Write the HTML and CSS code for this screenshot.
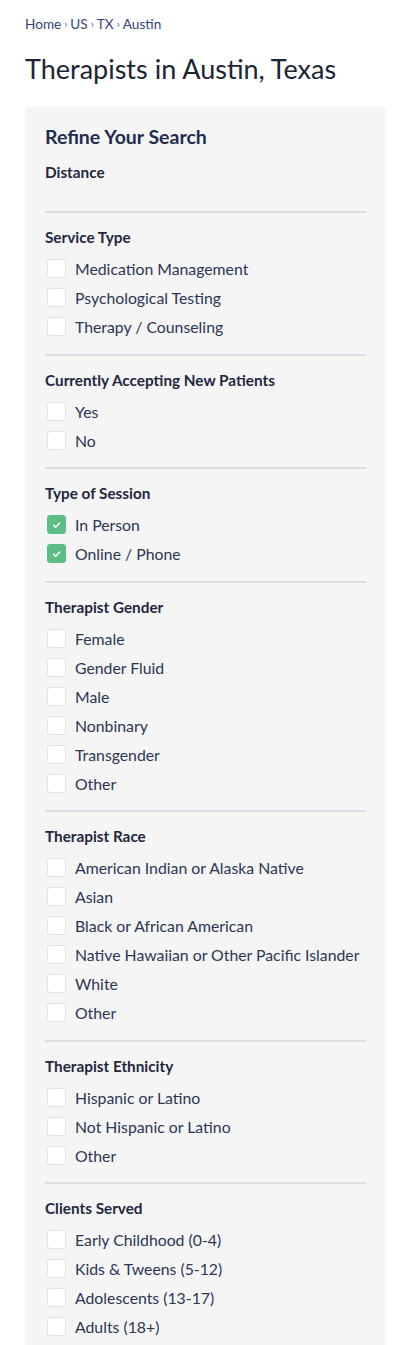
FILE: index.html
```html
<!DOCTYPE html>
<html lang="en">
<head>
<meta charset="utf-8">
<title>Therapists in Austin, Texas</title>
<link rel="stylesheet" href="styles.css">
</head>
<body>
<div class="page">
  <nav class="crumbs"><a>Home</a><span class="sep">›</span><a>US</a><span class="sep">›</span><a>TX</a><span class="sep">›</span><a>Austin</a></nav>
  <h1 class="title">Therapists in Austin, Texas</h1>
  <aside class="panel">
    <h2 class="panel-title">Refine Your Search</h2>
    <div class="section first">
      <h3 class="heading">Distance</h3>
      <div class="distance-space"></div>
    </div>
    <div class="section">
      <h3 class="heading">Service Type</h3>
      <ul class="opts">
        <li class="opt"><span class="box"></span>Medication Management</li>
        <li class="opt"><span class="box"></span>Psychological Testing</li>
        <li class="opt"><span class="box"></span>Therapy / Counseling</li>
      </ul>
    </div>
    <div class="section">
      <h3 class="heading">Currently Accepting New Patients</h3>
      <ul class="opts">
        <li class="opt"><span class="box"></span>Yes</li>
        <li class="opt"><span class="box"></span>No</li>
      </ul>
    </div>
    <div class="section">
      <h3 class="heading">Type of Session</h3>
      <ul class="opts">
        <li class="opt"><span class="box checked"><svg viewBox="0 0 18 18" width="18" height="18"><path d="M6 9.2l2.1 2.1L12.2 7" fill="none" stroke="#fff" stroke-width="1.6" stroke-linecap="round" stroke-linejoin="round"/></svg></span>In Person</li>
        <li class="opt"><span class="box checked"><svg viewBox="0 0 18 18" width="18" height="18"><path d="M6 9.2l2.1 2.1L12.2 7" fill="none" stroke="#fff" stroke-width="1.6" stroke-linecap="round" stroke-linejoin="round"/></svg></span>Online / Phone</li>
      </ul>
    </div>
    <div class="section">
      <h3 class="heading">Therapist Gender</h3>
      <ul class="opts">
        <li class="opt"><span class="box"></span>Female</li>
        <li class="opt"><span class="box"></span>Gender Fluid</li>
        <li class="opt"><span class="box"></span>Male</li>
        <li class="opt"><span class="box"></span>Nonbinary</li>
        <li class="opt"><span class="box"></span>Transgender</li>
        <li class="opt"><span class="box"></span>Other</li>
      </ul>
    </div>
    <div class="section">
      <h3 class="heading">Therapist Race</h3>
      <ul class="opts">
        <li class="opt"><span class="box"></span>American Indian or Alaska Native</li>
        <li class="opt"><span class="box"></span>Asian</li>
        <li class="opt"><span class="box"></span>Black or African American</li>
        <li class="opt"><span class="box"></span>Native Hawaiian or Other Pacific Islander</li>
        <li class="opt"><span class="box"></span>White</li>
        <li class="opt"><span class="box"></span>Other</li>
      </ul>
    </div>
    <div class="section">
      <h3 class="heading">Therapist Ethnicity</h3>
      <ul class="opts">
        <li class="opt"><span class="box"></span>Hispanic or Latino</li>
        <li class="opt"><span class="box"></span>Not Hispanic or Latino</li>
        <li class="opt"><span class="box"></span>Other</li>
      </ul>
    </div>
    <div class="section">
      <h3 class="heading">Clients Served</h3>
      <ul class="opts">
        <li class="opt"><span class="box"></span>Early Childhood (0-4)</li>
        <li class="opt"><span class="box"></span>Kids &amp; Tweens (5-12)</li>
        <li class="opt"><span class="box"></span>Adolescents (13-17)</li>
        <li class="opt"><span class="box"></span>Adults (18+)</li>
      </ul>
    </div>
  </aside>
</div>
</body>
</html>
```
FILE: styles.css
```css
* { box-sizing: border-box; }
html, body { margin: 0; padding: 0; background: #fff; }
body {
  font-family: Lato, "Open Sans", "Liberation Sans", sans-serif;
  color: #1f2a44;
  height: 1345px;
  overflow: hidden;
}
.page {
  padding: 15px 14px 0 25px;
}
.crumbs {
  font-size: 13.6px;
  line-height: 18px;
  color: #34427a;
  display: flex;
  align-items: center;
}
.crumbs .sep {
  font-size: 11px;
  margin: 0 3px;
  color: #5a6590;
}
.title {
  margin: 19px 0 0;
  font-size: 27px;
  line-height: 34px;
  font-weight: 400;
  color: #1d2433;
}
.panel {
  margin-top: 21px;
  background: #f5f5f5;
  border-radius: 5px;
  padding: 17px 20px 20px;
}
.panel-title {
  margin: 0;
  font-size: 19.5px;
  line-height: 26px;
  font-weight: 700;
  color: #222c4f;
}
.section {
  border-top: 2px solid #dcdce6;
  padding: 14px 0 12.5px;
}
.section.first {
  border-top: 0;
  padding: 12px 0 29px;
}
.heading {
  margin: 0;
  font-size: 15.3px;
  line-height: 20px;
  font-weight: 700;
  color: #1f2740;
}
.opts {
  list-style: none;
  margin: 7px 0 0;
  padding: 0;
}
.opt {
  display: flex;
  align-items: center;
  height: 29px;
  font-size: 15.8px;
  color: #2c3654;
  white-space: nowrap;
}
.box {
  width: 19px;
  height: 19px;
  margin-left: 2px;
  margin-right: 9px;
  background: #fff;
  border: 1px solid #e2e2e8;
  border-radius: 3px;
  flex: none;
  display: flex;
  align-items: center;
  justify-content: center;
}
.box.checked {
  background: #5cbd86;
  border-color: #5cbd86;
}
.box svg { display: block; }
```
